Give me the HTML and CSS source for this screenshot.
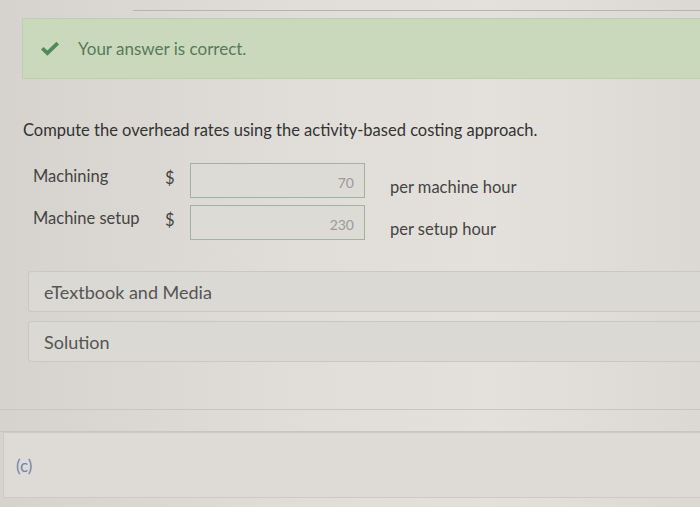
FILE: index.html
```html
<!DOCTYPE html>
<html lang="en">

<head>
	<meta charset="UTF-8" />
	<meta name="viewport" content="width=device-width, initial-scale=1.0" />
	<title>Question</title>
	<link rel="stylesheet" href="styles.css">
</head>

<body>
	<div class="top-edge"></div>

	<div class="notice-correct">
		<svg class="check" viewBox="0 0 20 16" width="20" height="16">
			<path d="M1 8.5 L3.6 5.9 L7.4 9.6 L16.4 0.8 L19 3.4 L7.4 14.8 Z" fill="#4f8a59" />
		</svg>
		<span>Your answer is correct.</span>
	</div>

	<p class="prompt">Compute the overhead rates using the activity-based costing approach.</p>

	<div class="rates">
		<div class="rate-row">
			<span class="rate-label">Machining</span>
			<span class="currency">$</span>
			<div class="answer-box">70</div>
			<span class="unit">per machine hour</span>
		</div>
		<div class="rate-row">
			<span class="rate-label">Machine setup</span>
			<span class="currency">$</span>
			<div class="answer-box">230</div>
			<span class="unit">per setup hour</span>
		</div>
	</div>

	<div class="links">
		<div class="link-box">eTextbook and Media</div>
		<div class="link-box">Solution</div>
	</div>

	<div class="divider"></div>

	<div class="part">
		<span class="part-label">(c)</span>
	</div>
</body>

</html>
```

FILE: styles.css
```css
body {
	margin: 0;
	height: 507px;
	overflow: hidden;
	font-family: Lato, "Open Sans", sans-serif;
	background: linear-gradient(90deg, #d6d3ce 0%, #e0ddd8 40%, #e4e1dc 70%, #dcd9d4 100%);
	color: #3a3a3a;
}

.top-edge {
	margin-left: 133px;
	height: 10px;
	border-bottom: 1px solid #b8b3ae;
}

.notice-correct {
	display: flex;
	align-items: center;
	margin: 7px 0 0 22px;
	height: 59px;
	padding-left: 17px;
	background-color: #cad9bb;
	border: 1px solid #c0ceb0;
	border-right: none;
	border-radius: 2px 0 0 2px;
}

.check {
	margin-right: 18px;
}

.notice-correct span {
	font-size: 17px;
	color: #58795a;
}

.prompt {
	margin: 41px 0 0 23px;
	font-size: 16.5px;
	color: #333;
}

.rates {
	margin: 23px 0 0 33px;
	display: flex;
	flex-direction: column;
	gap: 7px;
}

.rate-row {
	display: flex;
	align-items: center;
	font-size: 16.5px;
	color: #444;
}

.rate-label {
	width: 132px;
	margin-bottom: 10px;
}

.currency {
	width: 25px;
	margin-bottom: 6px;
}

.answer-box {
	box-sizing: border-box;
	width: 175px;
	height: 35px;
	padding: 4px 10px 0 0;
	display: flex;
	align-items: center;
	justify-content: flex-end;
	background-color: #dcdbd6;
	border: 1px solid #9fb49a;
	font-size: 14px;
	color: #9a9a9a;
}

.unit {
	margin-left: 25px;
	margin-top: 12px;
	color: #444;
}

.links {
	margin: 31px 0 0 28px;
	display: flex;
	flex-direction: column;
	gap: 9px;
}

.link-box {
	height: 39px;
	padding-left: 15px;
	display: flex;
	align-items: center;
	background-color: #dbd9d4;
	border: 1px solid #cbc8c3;
	border-right: none;
	border-radius: 3px 0 0 3px;
	font-size: 18px;
	color: #555;
}

.divider {
	margin-top: 47px;
	height: 21px;
	border-top: 1px solid #c9c6c1;
	border-bottom: 1px solid #c9c6c1;
}

.part {
	margin: 0 0 0 3px;
	height: 64px;
	padding-left: 12px;
	display: flex;
	align-items: center;
	background-color: #dedbd6;
	border: 1px solid #cdcac5;
	border-right: none;
}

.part-label {
	font-size: 17px;
	color: #6f85ae;
}
```
